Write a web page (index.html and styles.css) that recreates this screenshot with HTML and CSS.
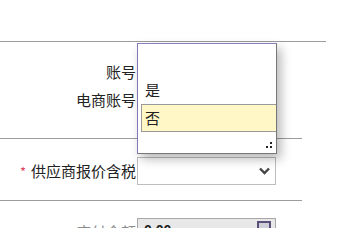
FILE: index.html
```html
<!DOCTYPE html>
<html lang="zh-CN">
  <head>
    <meta charset="UTF-8" />
    <title>供应商报价</title>
    <link rel="stylesheet" href="styles.css">
  </head>
  <body>
    <div class="form">
      <div class="rule rule-wide"></div>
      <section class="group group-account">
        <div class="row">
          <label class="label">账号</label>
          <div class="field"></div>
        </div>
        <div class="row">
          <label class="label">电商账号</label>
          <div class="field"></div>
        </div>
      </section>
      <div class="rule"></div>
      <section class="group group-tax">
        <div class="row">
          <label class="label"><span class="required">*</span>供应商报价含税</label>
          <div class="select">
            <svg class="chevron" width="11" height="8" viewBox="0 0 11 8">
              <path d="M1 1.5 L5.5 6 L10 1.5" fill="none" stroke="#454545" stroke-width="2.4" />
            </svg>
          </div>
        </div>
      </section>
      <div class="rule"></div>
      <section class="group group-amount">
        <div class="row">
          <label class="label label-muted">应付金额</label>
          <div class="input-readonly">
            <span class="value">0.00</span>
            <span class="calc-icon"></span>
          </div>
        </div>
      </section>

      <div class="dropdown">
        <div class="option option-empty"></div>
        <div class="option">是</div>
        <div class="option option-active">否</div>
        <div class="dropdown-foot">
          <svg class="grip" width="6" height="6" viewBox="0 0 6 6">
            <rect x="4" y="0" width="2" height="2" fill="#222" />
            <rect x="0" y="4" width="2" height="2" fill="#222" />
            <rect x="4" y="4" width="2" height="2" fill="#222" />
          </svg>
        </div>
      </div>
    </div>
  </body>
</html>
```

FILE: styles.css
```css
* {
  margin: 0;
  padding: 0;
  box-sizing: border-box;
}

body {
  background: #fff;
  font-family: "Noto Sans CJK SC", "Noto Sans", sans-serif;
  font-size: 15px;
  color: #222;
  overflow: hidden;
}

.form {
  position: relative;
  padding-top: 41px;
  width: 350px;
  height: 228px;
}

.rule {
  width: 302px;
  height: 1px;
  background: #9c9c9c;
}
.rule-wide {
  width: 326px;
}

.group-account {
  padding: 16px 0 24px;
  height: 96px;
}
.group-tax {
  padding-top: 18px;
  height: 61px;
}
.group-amount {
  padding-top: 17px;
}

.row {
  display: flex;
  align-items: center;
  height: 28px;
}

.label {
  width: 137px;
  padding-right: 1px;
  text-align: right;
  white-space: nowrap;
  line-height: 28px;
}
.label-muted {
  color: #8a8a8a;
}
.required {
  color: #e0455f;
  margin-right: 5px;
  font-size: 13px;
}

.field {
  width: 139px;
  height: 28px;
}

.select {
  width: 139px;
  height: 28px;
  border: 1px solid #bdbdbd;
  background: #fff;
  display: flex;
  align-items: center;
  justify-content: flex-end;
  padding-right: 5px;
}

.input-readonly {
  width: 139px;
  height: 28px;
  border: 1px solid #a8a8a8;
  background: #e8e8e8;
  display: flex;
  align-items: flex-start;
  justify-content: space-between;
  padding: 3px 4px 0 6px;
  font-family: "Liberation Sans", sans-serif;
  font-weight: bold;
  font-size: 14px;
}
.calc-icon {
  width: 14px;
  height: 14px;
  border: 2px solid #5a4f7a;
  background: #cfcfd8;
  margin-top: -1px;
}

.dropdown {
  position: absolute;
  left: 137px;
  top: 43px;
  width: 140px;
  height: 111px;
  background: #fff;
  border: 1px solid #777;
  border-left-color: #8278b8;
  border-top-color: #8a82bc;
  box-shadow: 4px 5px 10px rgba(0, 0, 0, 0.28);
  padding: 0 0 0 3px;
}
.option {
  height: 28px;
  line-height: 28px;
  padding-left: 4px;
}
.option-empty {
  height: 32px;
}
.option-active {
  background: #fff8c6;
  border: 1px solid #9a9a9a;
  border-right: none;
  line-height: 26px;
  padding-left: 3px;
}
.dropdown-foot {
  height: 20px;
  display: flex;
  align-items: flex-end;
  justify-content: flex-end;
  padding: 0 4px 4px 0;
}
```
